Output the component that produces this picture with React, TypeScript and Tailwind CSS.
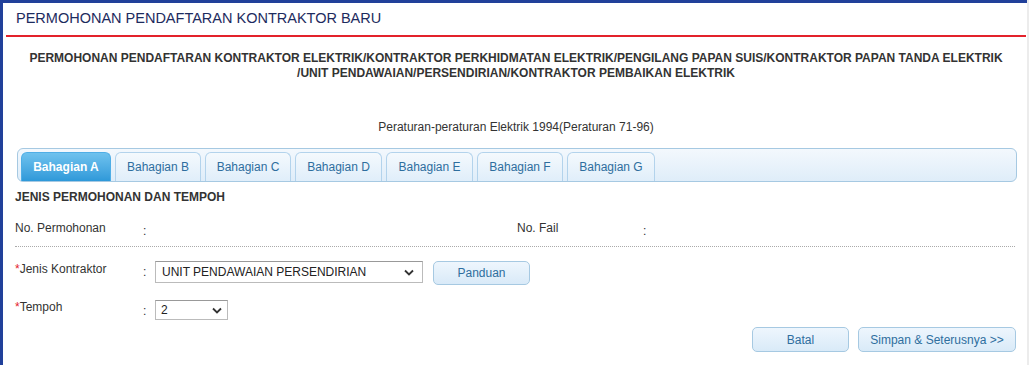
import type React from "react"

const tabs = ["Bahagian A", "Bahagian B", "Bahagian C", "Bahagian D", "Bahagian E", "Bahagian F", "Bahagian G"]
const tabWidths = [90, 86, 86, 87, 87, 86, 88]

const Chevron: React.FC = () => (
  <svg width="10" height="7" viewBox="0 0 10 7" className="shrink-0">
    <path d="M1 1.5 L5 5.5 L9 1.5" fill="none" stroke="#333" strokeWidth="1.8" />
  </svg>
)

const App: React.FC = () => {
  return (
    <div className="w-[1029px] h-[365px] bg-white overflow-hidden flex font-['Liberation_Sans',Arial,sans-serif] text-[12px] text-[#333]">
      <div className="flex-1 border-t-[3px] border-l-[3px] border-[#21409a] bg-white">
        <div className="pl-[3px] pr-[1px]">
          <div className="h-[34px] flex items-center pl-[10px] text-[14.5px] text-[#1d2b5e] border-b-2 border-[#e3222b]">
            PERMOHONAN PENDAFTARAN KONTRAKTOR BARU
          </div>
        </div>

        <div className="pl-[12px] pr-[10px]">
          <div className="mt-[14px] text-center font-bold text-[12px] leading-[15px] text-[#333]">
            PERMOHONAN PENDAFTARAN KONTRAKTOR ELEKTRIK/KONTRAKTOR PERKHIDMATAN ELEKTRIK/PENGILANG PAPAN SUIS/KONTRAKTOR PAPAN TANDA ELEKTRIK
            <br />
            /UNIT PENDAWAIAN/PERSENDIRIAN/KONTRAKTOR PEMBAIKAN ELEKTRIK
          </div>

          <div className="mt-[39px] text-center leading-[14px] text-[#333]">
            Peraturan-peraturan Elektrik 1994(Peraturan 71-96)
          </div>

          <div className="mt-[14px] ml-[2px] h-[34px] rounded-[6px] border border-[#a6c9e2] bg-gradient-to-b from-[#f3f8fd] to-[#dfedf9] flex items-end gap-[4px] pl-[3px]">
            {tabs.map((t, i) =>
              i === 0 ? (
                <div
                  key={t}
                  style={{ width: tabWidths[i] }}
                  className="h-[29px] rounded-t-[6px] border border-b-0 border-[#4faee6] bg-gradient-to-b from-[#6ec2ee] to-[#2e99d9] text-white font-bold flex items-center justify-center"
                >
                  {t}
                </div>
              ) : (
                <div
                  key={t}
                  style={{ width: tabWidths[i] }}
                  className="h-[29px] rounded-t-[6px] border border-b-0 border-[#b3d3ec] bg-gradient-to-b from-[#f4f9fd] to-[#e0eefa] text-[#2e6e9e] flex items-center justify-center"
                >
                  {t}
                </div>
              )
            )}
          </div>

          <div className="mt-[8px] font-bold leading-[14px] text-[#333]">JENIS PERMOHONAN DAN TEMPOH</div>

          <div className="mt-[17px] flex items-start h-[20px]">
            <div className="w-[128px] leading-[14px]">No. Permohonan</div>
            <div className="w-[374px] pt-[3px] leading-[14px]">:</div>
            <div className="w-[126px] leading-[14px]">No. Fail</div>
            <div className="pt-[3px] leading-[14px]">:</div>
          </div>

          <div className="mt-[5px] mr-[2px] border-t border-dotted border-[#aaa]" />

          <div className="mt-[13px] flex items-start">
            <div className="w-[128px] pt-[2px] leading-[14px]">
              <span className="text-[#e3222b]">*</span>Jenis Kontraktor
            </div>
            <div className="w-[12px] pt-[5px] leading-[14px]">:</div>
            <div className="mt-[1px] w-[268px] h-[22px] border border-[#bbb] border-t-[#999] bg-white flex items-center justify-between pl-[6px] pr-[8px] text-[#222]">
              <span>UNIT PENDAWAIAN PERSENDIRIAN</span>
              <Chevron />
            </div>
            <button className="mt-[1px] ml-[10px] w-[97px] h-[24px] rounded-[5px] border border-[#a6c9e2] bg-gradient-to-b from-[#eef6fd] to-[#d9eaf8] text-[#2e6e9e] text-[12px]">
              Panduan
            </button>
          </div>

          <div className="mt-[15px] flex items-start">
            <div className="w-[128px] leading-[14px]">
              <span className="text-[#e3222b]">*</span>Tempoh
            </div>
            <div className="w-[12px] pt-[4px] leading-[14px]">:</div>
            <div className="w-[73px] h-[20px] border border-[#bbb] border-t-[#999] bg-white flex items-center justify-between pl-[5px] pr-[5px] text-[#222]">
              <span>2</span>
              <Chevron />
            </div>
          </div>

          <div className="mt-[7px] flex justify-end gap-[9px] pr-[1px]">
            <button className="w-[97px] h-[25px] rounded-[5px] border border-[#a6c9e2] bg-gradient-to-b from-[#eef6fd] to-[#d9eaf8] text-[#2e6e9e] text-[12px]">
              Batal
            </button>
            <button className="w-[158px] h-[25px] rounded-[5px] border border-[#a6c9e2] bg-gradient-to-b from-[#eef6fd] to-[#d9eaf8] text-[#2e6e9e] text-[12px]">
              Simpan &amp; Seterusnya &gt;&gt;
            </button>
          </div>
        </div>
      </div>
      <div className="w-[2px] bg-[#ececec]" />
    </div>
  )
}

export default App
